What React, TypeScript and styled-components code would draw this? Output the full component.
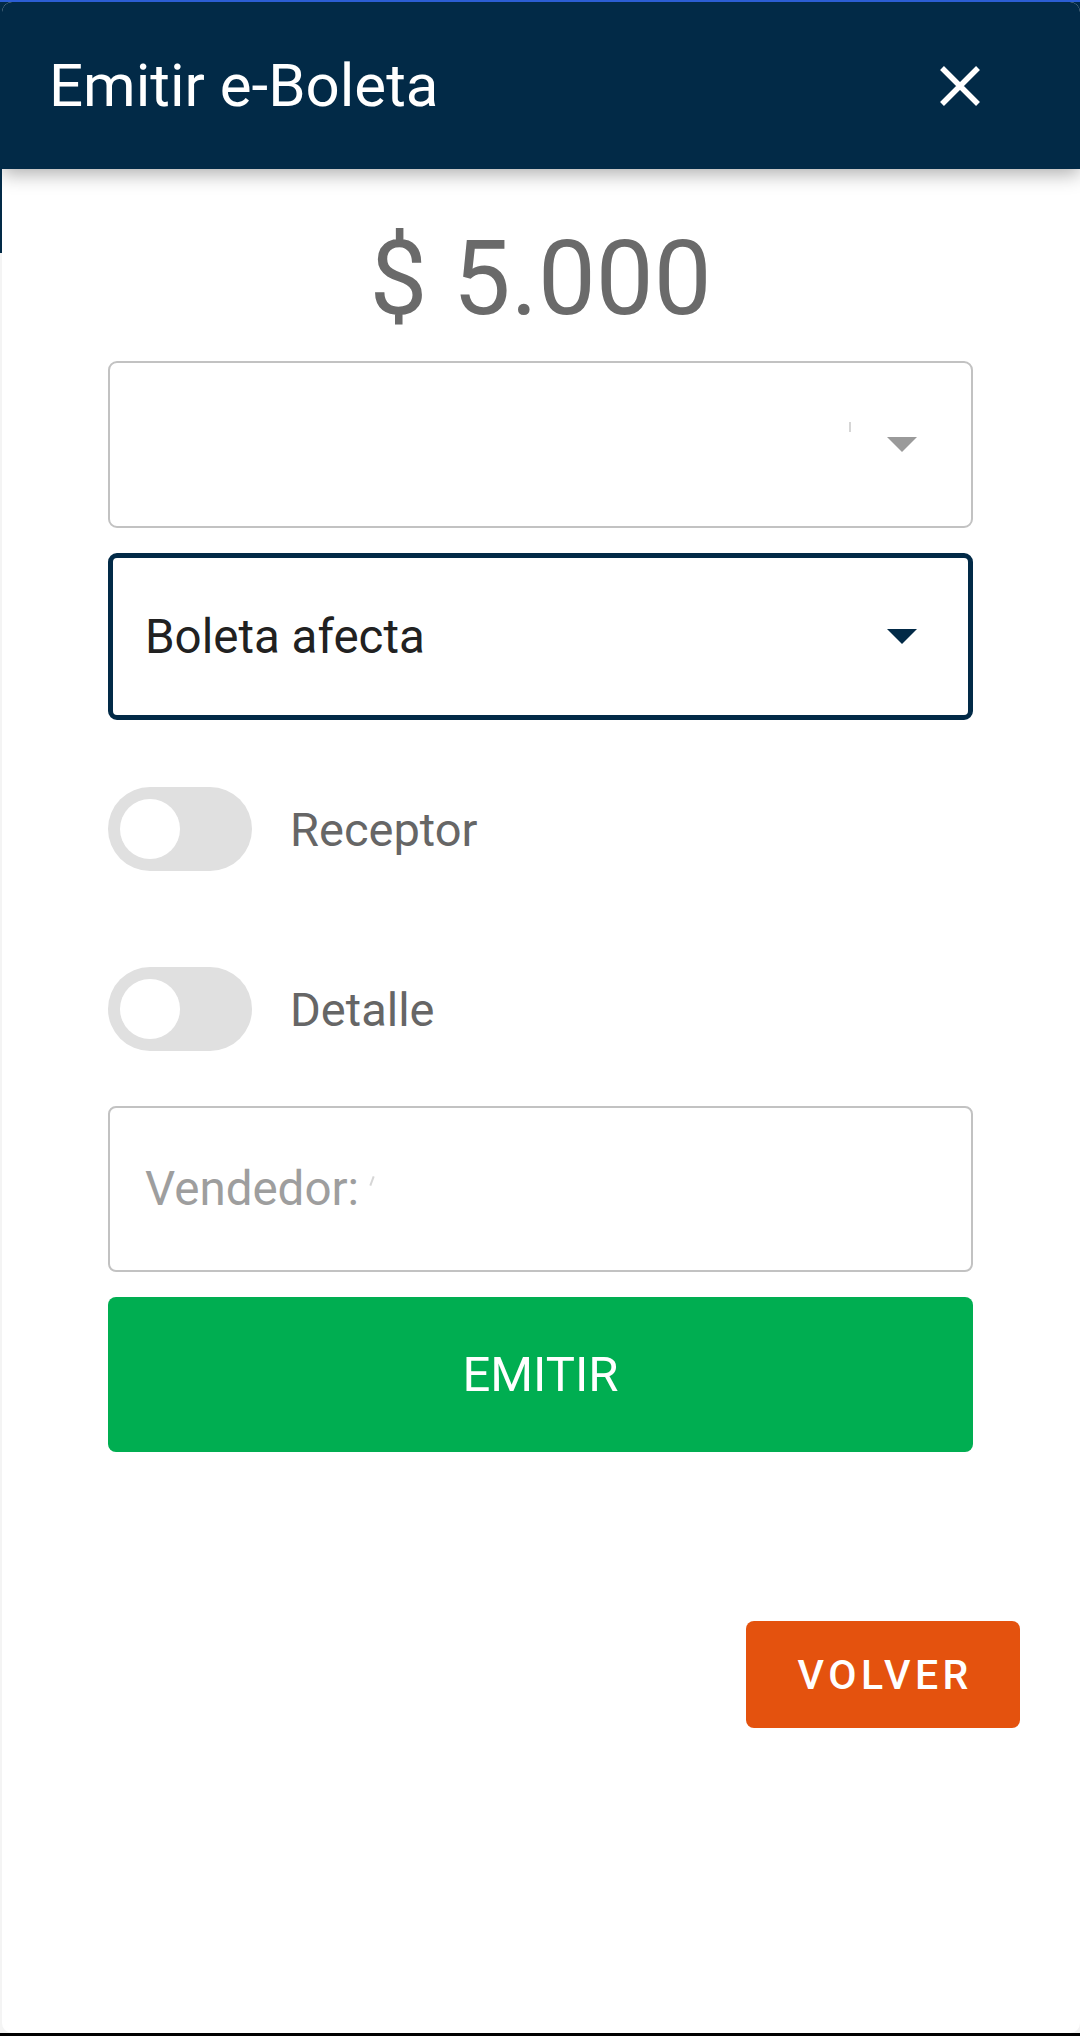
import React from "react";
import styled, { createGlobalStyle } from "styled-components";

const GlobalStyle = createGlobalStyle`
  html, body { margin: 0; padding: 0; }
  body {
    background: #ffffff;
    font-family: Roboto, "Noto Sans", "Liberation Sans", sans-serif;
    -webkit-font-smoothing: antialiased;
  }
  * { box-sizing: border-box; }
`;

const NAVY = "#022a47";

const Screen = styled.div`
  min-height: 2036px;
  display: flex;
  flex-direction: column;
  padding: 2px 0 3px 2px;
  background: linear-gradient(
    to bottom,
    #2c5ed4 0px,
    #2c5ed4 2px,
    ${NAVY} 2px,
    ${NAVY} 253px,
    #f4f4f4 253px,
    #f4f4f4 calc(100% - 3px),
    #000000 calc(100% - 3px)
  );
`;

const Dialog = styled.div`
  flex: 1;
  display: flex;
  flex-direction: column;
  background: #ffffff;
  border-radius: 10px;
  overflow: hidden;
`;

const Header = styled.header`
  position: relative;
  z-index: 1;
  height: 167px;
  display: flex;
  align-items: center;
  justify-content: space-between;
  padding: 0 99px 0 47px;
  background: ${NAVY};
  box-shadow: 0 5px 18px rgba(0, 0, 0, 0.32);
`;

const Title = styled.h1`
  margin: 0;
  font-size: 60px;
  font-weight: 400;
  color: #ffffff;
  line-height: 1;
`;

const CloseButton = styled.button`
  display: flex;
  padding: 0;
  border: none;
  background: transparent;
  cursor: pointer;
`;

const Body = styled.main`
  display: flex;
  flex-direction: column;
`;

const Form = styled.div`
  display: flex;
  flex-direction: column;
  padding: 0 107px 0 106px;
`;

const Amount = styled.div`
  margin-top: 50px;
  font-size: 103px;
  line-height: 120px;
  color: #6a6a6a;
  text-align: center;
`;

const SelectBox = styled.div<{ $focused?: boolean; $gap: number }>`
  margin-top: ${(p) => p.$gap}px;
  height: 167px;
  display: flex;
  align-items: center;
  padding: 0 ${(p) => (p.$focused ? 51 : 54)}px 0 ${(p) => (p.$focused ? 32 : 35)}px;
  border: ${(p) => (p.$focused ? `5px solid ${NAVY}` : "2px solid #c2c2c2")};
  border-radius: 9px;
  background: #ffffff;
`;

const SelectValue = styled.span`
  flex: 1;
  font-size: 47.5px;
  color: #212121;
`;

const Mark = styled.span<{ $right: number; $lift: number; $tilt: number }>`
  width: 2px;
  height: 10px;
  margin-right: ${(p) => p.$right}px;
  margin-bottom: ${(p) => p.$lift}px;
  background: #d6d6d6;
  transform: rotate(${(p) => p.$tilt}deg);
`;

const ToggleRow = styled.label<{ $gap: number }>`
  margin-top: ${(p) => p.$gap}px;
  height: 84px;
  display: flex;
  align-items: center;
  gap: 38px;
`;

const Track = styled.span`
  width: 144px;
  height: 84px;
  padding: 12px;
  display: flex;
  align-items: center;
  border-radius: 42px;
  background: #e0e0e0;
`;

const Knob = styled.span`
  width: 60px;
  height: 60px;
  border-radius: 50%;
  background: #ffffff;
`;

const ToggleLabel = styled.span`
  font-size: 47px;
  color: #666666;
`;

const TextField = styled.div`
  margin-top: 55px;
  height: 166px;
  display: flex;
  align-items: center;
  padding: 0 35px;
  border: 2px solid #c2c2c2;
  border-radius: 8px;
`;

const Placeholder = styled.span`
  font-size: 47.5px;
  color: #9e9e9e;
  white-space: pre;
`;

const PrimaryButton = styled.button`
  margin-top: 25px;
  height: 155px;
  border: none;
  border-radius: 8px;
  background: #00ae51;
  color: #ffffff;
  font-family: inherit;
  font-size: 49px;
  font-weight: 400;
  cursor: pointer;
`;

const Footer = styled.div`
  display: flex;
  justify-content: flex-end;
  padding: 169px 60px 0 0;
`;

const BackButton = styled.button`
  width: 274px;
  height: 107px;
  border: none;
  border-radius: 8px;
  background: #e4520e;
  color: #ffffff;
  font-family: inherit;
  font-size: 41px;
  font-weight: 500;
  letter-spacing: 4.5px;
  text-indent: 4.5px;
  cursor: pointer;
`;

const Arrow = ({ color }: { color: string }) => (
  <svg width="30" height="15" viewBox="0 0 30 15">
    <polygon points="0,0 30,0 15,15" fill={color} />
  </svg>
);

export default function App() {
  return (
    <>
      <GlobalStyle />
      <Screen>
        <Dialog>
          <Header>
            <Title>Emitir e-Boleta</Title>
            <CloseButton aria-label="Cerrar">
              <svg width="42" height="42" viewBox="0 0 42 42">
                <path d="M3 3 L39 39 M39 3 L3 39" stroke="#ffffff" strokeWidth="5.5" />
              </svg>
            </CloseButton>
          </Header>
          <Body>
            <Form>
              <Amount>$ 5.000</Amount>
              <SelectBox $gap={22}>
                <SelectValue />
                <Mark $right={36} $lift={36} $tilt={0} />
                <Arrow color="#9a9a9a" />
              </SelectBox>
              <SelectBox $gap={25} $focused>
                <SelectValue>Boleta afecta</SelectValue>
                <Arrow color={NAVY} />
              </SelectBox>
              <ToggleRow $gap={67}>
                <Track>
                  <Knob />
                </Track>
                <ToggleLabel>Receptor</ToggleLabel>
              </ToggleRow>
              <ToggleRow $gap={96}>
                <Track>
                  <Knob />
                </Track>
                <ToggleLabel>Detalle</ToggleLabel>
              </ToggleRow>
              <TextField>
                <Placeholder>Vendedor: </Placeholder>
                <Mark $right={0} $lift={16} $tilt={20} />
              </TextField>
              <PrimaryButton>EMITIR</PrimaryButton>
            </Form>
            <Footer>
              <BackButton>VOLVER</BackButton>
            </Footer>
          </Body>
        </Dialog>
      </Screen>
    </>
  );
}
